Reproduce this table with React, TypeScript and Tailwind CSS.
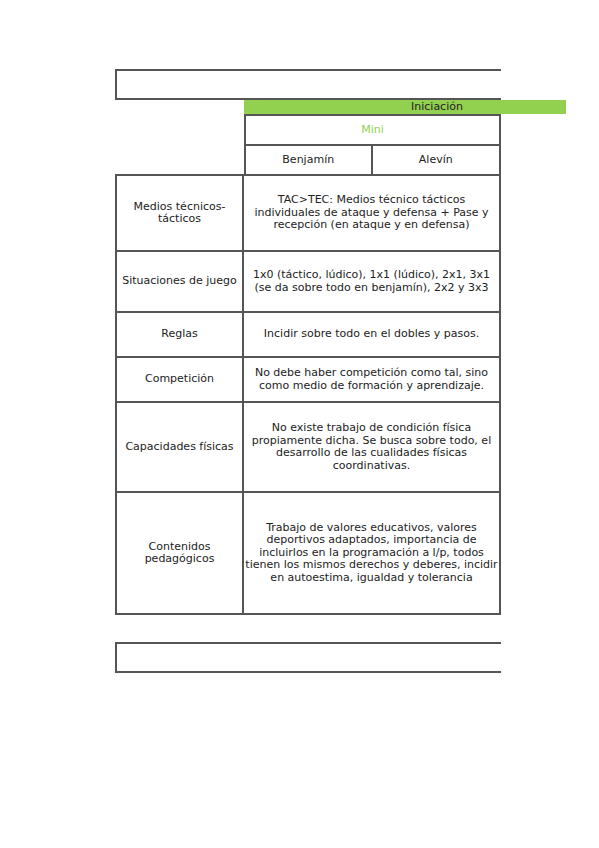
const line = "border-[#555]"

interface Row {
  label: string[]
  text: string[]
  h: string
}

const rows: Row[] = [
  {
    label: ["Medios técnicos-", "tácticos"],
    text: [
      "TAC>TEC: Medios técnico tácticos",
      "individuales de ataque y defensa + Pase y",
      "recepción (en ataque y en defensa)",
    ],
    h: "h-[74px]",
  },
  {
    label: ["Situaciones de juego"],
    text: [
      "1x0 (táctico, lúdico), 1x1 (lúdico), 2x1, 3x1",
      "(se da sobre todo en benjamín), 2x2 y 3x3",
    ],
    h: "h-[61px]",
  },
  {
    label: ["Reglas"],
    text: ["Incidir sobre todo en el dobles y pasos."],
    h: "h-[45px]",
  },
  {
    label: ["Competición"],
    text: [
      "No debe haber competición como tal, sino",
      "como medio de formación y aprendizaje.",
    ],
    h: "h-[45px]",
  },
  {
    label: ["Capacidades físicas"],
    text: [
      "No existe trabajo de condición física",
      "propiamente dicha. Se busca sobre todo, el",
      "desarrollo de las cualidades físicas",
      "coordinativas.",
    ],
    h: "h-[90px]",
  },
  {
    label: ["Contenidos", "pedagógicos"],
    text: [
      "Trabajo de valores educativos, valores",
      "deportivos adaptados, importancia de",
      "incluirlos en la programación a l/p, todos",
      "tienen los mismos derechos y deberes, incidir",
      "en autoestima, igualdad y tolerancia",
    ],
    h: "h-[122px]",
  },
]

function Lines({ items }: { items: string[] }) {
  return (
    <>
      {items.map((t, i) => (
        <span key={i} className="block whitespace-nowrap">
          {t}
        </span>
      ))}
    </>
  )
}

export default function App() {
  return (
    <div
      className="min-h-[848px] bg-white pt-[69px] pl-[115px] text-[11px] leading-[12.5px] text-[#222]"
      style={{ fontFamily: '"DejaVu Sans", sans-serif' }}
    >
      {/* Title box */}
      <div className={`h-[31px] w-[386px] border-t-2 border-l-2 border-b-2 ${line}`} />

      {/* Green band */}
      <div className="flex h-[14px]">
        <div className="w-[129px]" />
        <div className="w-[322px] bg-[#92d050] pl-[167px] text-[11px] leading-[14px] text-[#222]">
          Iniciación
        </div>
      </div>

      {/* Mini */}
      <div
        className={`ml-[129px] flex h-[30px] w-[257px] items-center justify-center border-t-2 border-l-2 border-r-2 ${line} text-[#92d050]`}
      >
        Mini
      </div>

      {/* Benjamín / Alevín */}
      <div className={`ml-[129px] grid h-[30px] w-[257px] grid-cols-2 border-t-2 border-l-2 border-r-2 ${line}`}>
        <div className={`flex items-center justify-center border-r-2 ${line}`}>Benjamín</div>
        <div className="flex items-center justify-center">Alevín</div>
      </div>

      {/* Body */}
      <div className={`w-[386px] border-2 ${line}`}>
        {rows.map((r, i) => (
          <div key={i} className={`flex ${r.h} ${i > 0 ? `border-t-2 ${line}` : ""}`}>
            <div
              className={`flex w-[127px] shrink-0 flex-col items-center justify-center border-r-2 ${line} text-center`}
            >
              <Lines items={r.label} />
            </div>
            <div className="flex flex-1 flex-col items-center justify-center text-center">
              <Lines items={r.text} />
            </div>
          </div>
        ))}
      </div>

      {/* Bottom box */}
      <div className={`mt-[27px] h-[31px] w-[386px] border-t-2 border-l-2 border-b-2 ${line}`} />
    </div>
  )
}
